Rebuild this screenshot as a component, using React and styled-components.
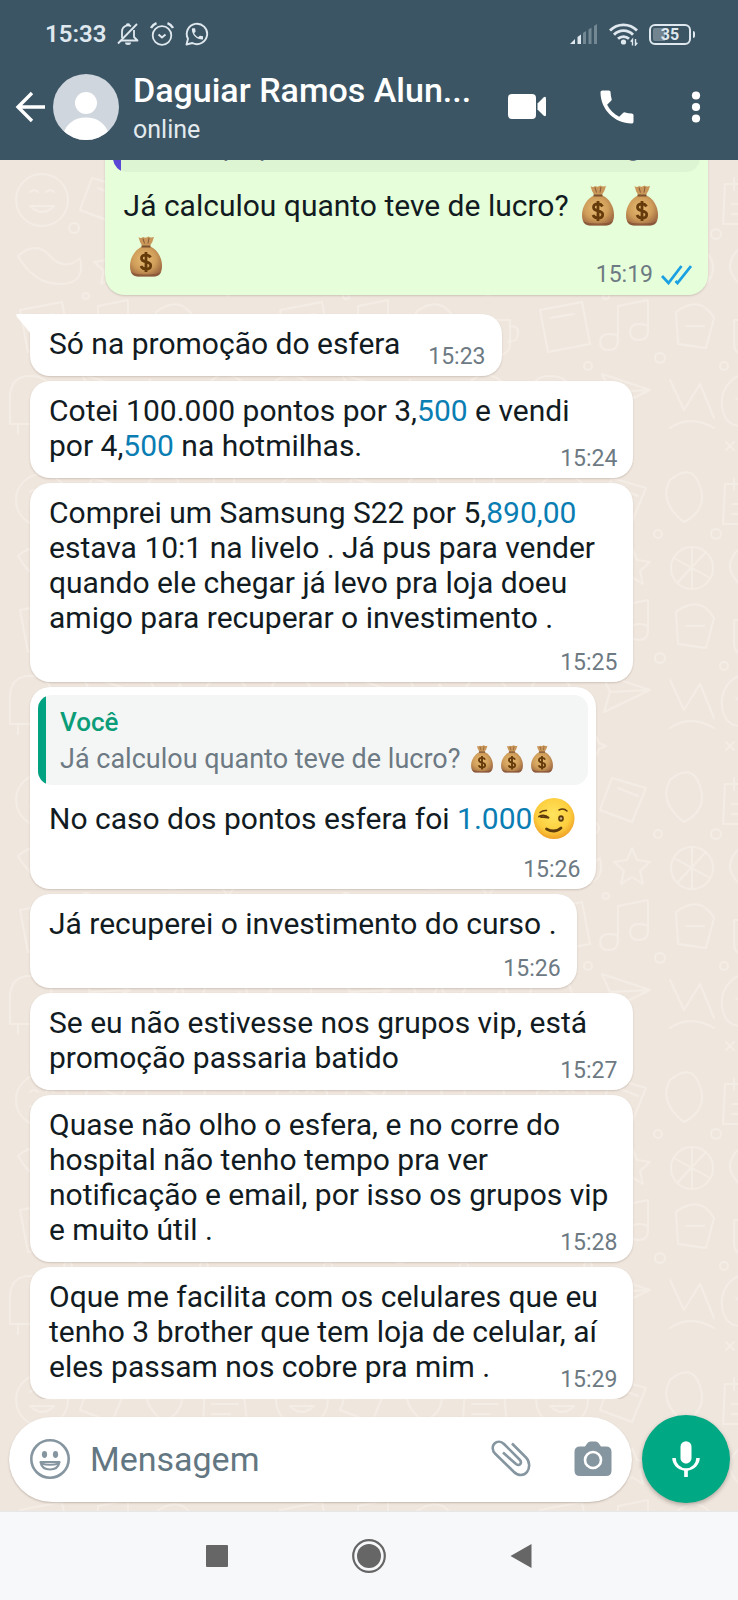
import React, { useState } from "react";
import styled, { createGlobalStyle } from "styled-components";

const GlobalStyle = createGlobalStyle`
  * {
    box-sizing: border-box;
  }

  body {
    margin: 0;
    font-family: Roboto, "Liberation Sans", sans-serif;
    color: #111b21;
  }

  button {
    display: flex;
    align-items: center;
    justify-content: center;
    padding: 0;
    border: none;
    background: transparent;
    color: inherit;
    cursor: pointer;
  }

  svg {
    flex-shrink: 0;
  }
`;

const Page = styled.div`
  display: flex;
  flex-direction: column;
  height: 100vh;
  overflow: hidden;
`;

/* ---------- header ---------- */

const Header = styled.header`
  position: relative;
  z-index: 1;
  background: #3b5564;
  color: #fff;
`;

const StatusBar = styled.div`
  display: flex;
  align-items: center;
  justify-content: space-between;
  height: 54px;
  padding: 14px 47px 0 45px;
  color: #dfe8ee;
`;

const StatusGroup = styled.div`
  display: flex;
  align-items: center;
  gap: ${(props) => props.$gap}px;
`;

const Clock = styled.time`
  font-size: 24px;
  line-height: 32px;
  font-weight: 600;
`;

const AppBar = styled.div`
  display: flex;
  align-items: center;
  height: 106px;
  padding: 0 8px 0 14px;
`;

const BackButton = styled.button`
  width: 32px;
  height: 60px;
  margin-right: 7px;
`;

const Contact = styled.div`
  flex: 1;
  min-width: 0;
  padding: 4px 0 0 14px;
`;

const ContactName = styled.h1`
  margin: 0;
  font-size: 34px;
  line-height: 42px;
  font-weight: 500;
  white-space: nowrap;
`;

const ContactStatus = styled.p`
  margin: 0;
  font-size: 25px;
  line-height: 38px;
  color: #e3eaee;
`;

const HeaderAction = styled.button`
  width: ${(props) => props.$width || 90}px;
  height: 60px;
`;

/* ---------- conversation ---------- */

const Chat = styled.main`
  position: relative;
  display: flex;
  flex: 1;
  flex-direction: column;
  min-height: 0;
  background: #efe6de;
`;

const Wallpaper = styled.svg`
  position: absolute;
  inset: 0;
  width: 100%;
  height: 100%;
`;

const Messages = styled.div`
  position: relative;
  display: flex;
  flex: 1;
  flex-direction: column;
  align-items: flex-start;
  justify-content: flex-end;
  gap: 5px;
  min-height: 0;
  padding: 0 30px;
  overflow: hidden;
`;

const Bubble = styled.article`
  position: relative;
  display: flow-root;
  flex-shrink: 0;
  align-self: ${(props) => (props.$sent ? "flex-end" : "flex-start")};
  width: ${(props) => (props.$wide ? "89%" : "fit-content")};
  max-width: 89%;
  margin-bottom: ${(props) => (props.$sent ? 14 : 0)}px;
  padding: 12px 20px 15px 19px;
  border-radius: 20px;
  border-top-left-radius: ${(props) => (props.$tail ? 0 : 20)}px;
  background: ${(props) => (props.$sent ? "#e6ffda" : "#fff")};
  box-shadow: 0 1px 2px rgba(90, 70, 50, 0.22);
  font-size: 30px;
  line-height: 35px;
  white-space: nowrap;
`;

const Tail = styled.svg`
  position: absolute;
  top: 0;
  left: -14px;
`;

const Time = styled.time`
  float: right;
  display: flex;
  align-items: center;
  gap: 8px;
  margin: ${(props) => (props.$tall ? 32 : 17)}px -4px -10px 28px;
  font-size: 23px;
  line-height: 28px;
  color: #6d7a83;
`;

// Time that sits on a row of its own under the text
const TimeBelow = styled(Time)`
  float: none;
  justify-content: flex-end;
  margin: 14px -4px -10px 0;
`;

const Linked = styled.a`
  color: #0a7db3;
  text-decoration: none;
`;

const Quote = styled.blockquote`
  display: flex;
  margin: -4px -12px 6px -11px;
  border-radius: 14px;
  overflow: hidden;
  background: ${(props) => (props.$sent ? "#def5d4" : "#f4f6f6")};
`;

const QuoteBar = styled.span`
  width: 8px;
  background: ${(props) => props.$color};
`;

const QuoteBody = styled.div`
  padding: 9px 15px 7px 14px;
  font-size: 27px;
  line-height: 37px;
  color: #6d7a83;
`;

const QuoteAuthor = styled.strong`
  display: block;
  font-size: 26px;
  font-weight: 500;
  color: ${(props) => props.$color};
`;

const Emoji = styled.svg`
  width: 44px;
  height: 44px;
  margin-top: 7px;
  vertical-align: -13px;
`;

const SmallEmoji = styled.svg`
  width: 30px;
  height: 30px;
  vertical-align: -7px;
`;

/* ---------- composer ---------- */

const Composer = styled.form`
  position: relative;
  display: flex;
  align-items: center;
  gap: 10px;
  padding: 16px 8px 8px 9px;
`;

const InputPill = styled.div`
  display: flex;
  flex: 1;
  align-items: center;
  min-width: 0;
  height: 85px;
  padding: 0 14px 0 16px;
  border-radius: 43px;
  background: #fff;
  box-shadow: 0 1px 2px rgba(90, 70, 50, 0.3);
  color: #8696a0;
`;

const PillButton = styled.button`
  width: ${(props) => props.$width}px;
  height: 60px;
`;

const MessageInput = styled.input`
  flex: 1;
  min-width: 0;
  padding: 0 15px;
  border: none;
  outline: none;
  background: transparent;
  font-family: inherit;
  font-size: 34px;
  line-height: 44px;
  color: #111b21;

  &::placeholder {
    color: #637782;
    opacity: 1;
  }
`;

const MicButton = styled.button`
  flex-shrink: 0;
  width: 88px;
  height: 88px;
  border-radius: 50%;
  background: #00a884;
  color: #fff;
  box-shadow: 0 2px 4px rgba(60, 50, 40, 0.35);
`;

const NavBar = styled.nav`
  display: flex;
  justify-content: center;
  height: 89px;
  border-top: 1px solid #e6e7e9;
  background: #f7f8fa;
  color: #666;
`;

const NavButton = styled.button`
  width: 152px;
`;

/* ---------- drawings ---------- */

const PHONE =
  "M6.62 10.79c1.44 2.83 3.76 5.14 6.59 6.59l2.2-2.2c.27-.27.67-.36 1.02-.24 1.12.37 2.33.57 3.57.57.55 0 1 .45 1 1V20c0 .55-.45 1-1 1-9.39 0-17-7.61-17-17 0-.55.45-1 1-1h3.5c.55 0 1 .45 1 1 0 1.25.2 2.45.57 3.57.11.35.03.74-.25 1.02l-2.2 2.2z";

const BellOffIcon = () => (
  <svg width="22" height="24" viewBox="0 0 22 24" fill="none" stroke="currentColor" strokeWidth="1.8">
    <path d="M5 16V9.500a6 6 0 0 1 9-5.200M17 8v7l3.500 3.500H4" strokeLinejoin="round" />
    <path d="M1 21.500L20 2" />
    <path d="M8 20.500h6a3 2.500 0 0 1-6 0z" fill="currentColor" stroke="none" />
    <path d="M9.500 3a1.800 1.800 0 0 1 3 0" />
  </svg>
);

const AlarmIcon = () => (
  <svg width="24" height="24" viewBox="0 0 24 24" fill="none" stroke="currentColor" strokeWidth="1.8">
    <circle cx="12" cy="13.500" r="9.300" />
    <path d="M1 6Q3 2.500 6.500 1.200M23 6Q21 2.500 17.500 1.200" strokeWidth="2.400" />
    <path d="M8.500 12.500l3.500 3 3.500-3" strokeWidth="2" />
  </svg>
);

const WhatsAppIcon = () => (
  <svg width="24" height="24" viewBox="0 0 24 24" fill="none">
    <path d="M1.500 22.500l1.500-5.700A10.200 10.200 0 1 1 7.300 21z" stroke="currentColor" strokeWidth="1.9" strokeLinejoin="round" />
    <path d={PHONE} fill="currentColor" transform="translate(5 4.500) scale(0.62)" />
  </svg>
);

const SignalIcon = () => (
  <svg width="28" height="20" viewBox="0 0 28 20" fill="currentColor">
    <path d="M0 20l5-5v5z" />
    <path d="M7.500 13l3.500-2.500V20H7.500z" />
    <path d="M13 9l3-2v13h-3zM18.500 5.500l3-2V20h-3zM24 2l3-2v20h-3z" opacity="0.35" />
  </svg>
);

const WifiIcon = () => (
  <svg width="29" height="24" viewBox="0 0 29 24" fill="none" stroke="currentColor" strokeWidth="2.8">
    <path d="M1 8.500a19 19 0 0 1 27 0" />
    <path d="M5 12.800a13 13 0 0 1 19 0" />
    <path d="M9 16.800a8 8 0 0 1 11 0" />
    <circle cx="14.500" cy="20" r="2.600" fill="currentColor" stroke="none" />
    <path d="M23.500 23.500v-6l-1.800 2.200M26.500 17v6l1.800-2.200" strokeWidth="1.4" />
  </svg>
);

const Battery = styled.span`
  position: relative;
  width: 42px;
  height: 21px;
  padding: 2px;
  border: 2px solid currentColor;
  border-radius: 6px;
  background: linear-gradient(90deg, #72848f 35%, transparent 35%) content-box;
  font-size: 16px;
  line-height: 14px;
  font-weight: 700;
  text-align: center;

  &::after {
    content: "";
    position: absolute;
    top: 5px;
    right: -6px;
    width: 2px;
    height: 7px;
    border-radius: 0 2px 2px 0;
    background: currentColor;
  }
`;

const BackIcon = () => (
  <svg width="32" height="32" viewBox="0 0 32 32" fill="none" stroke="currentColor" strokeWidth="3.4">
    <path d="M31 16H4M18 2L4 16l14 14" />
  </svg>
);

const Avatar = () => (
  <svg width="66" height="66" viewBox="0 0 66 66" role="img" aria-label="Foto do contato">
    <defs>
      <clipPath id="avatar-clip">
        <circle cx="33" cy="33" r="33" />
      </clipPath>
    </defs>
    <g clipPath="url(#avatar-clip)">
      <rect width="66" height="66" fill="#cfd6dd" />
      <circle cx="33" cy="29" r="11" fill="#fff" />
      <path d="M10 60Q16 43.500 33 43.500T56 60V66H10z" fill="#fff" />
    </g>
  </svg>
);

const VideoIcon = () => (
  <svg width="40" height="26" viewBox="0 0 40 26" fill="currentColor">
    <rect x="1" width="28" height="25" rx="4" />
    <path d="M30.500 9.500L36.500 3.500Q39 1.500 39 4.500v16q0 3-2.500 1L30.500 15.500z" />
  </svg>
);

const CallIcon = () => (
  <svg width="44" height="44" viewBox="0 0 24 24" fill="currentColor">
    <path d={PHONE} />
  </svg>
);

const MoreIcon = () => (
  <svg width="10" height="32" viewBox="0 0 10 32" fill="currentColor">
    <circle cx="5" cy="4.500" r="4.100" />
    <circle cx="5" cy="16" r="4.100" />
    <circle cx="5" cy="27.500" r="4.100" />
  </svg>
);

const ReadIcon = () => (
  <svg width="31" height="20" viewBox="0 0 31 20" fill="none" stroke="#1ba1e2" strokeWidth="2.8">
    <path d="M1 11l6.500 7L20.500 1" />
    <path d="M14.500 16l2 2L30 1" />
  </svg>
);

const BagShape = () => (
  <>
    <path d="M14.500 1q2.500 2 4.500 0 3 1.500 5.500-.5 2 1.500 5.500.5-1 5-4.500 9.500h-7Q15.500 6 14.500 1z" fill="#c9975a" />
    <path d="M18 10.500h8.500C33 13.500 38 21 38 30c0 7-3 10.500-8 10.500h-16c-5 0-8-3.500-8-10.500C6 21 11.500 13.500 18 10.500z" fill="url(#bag-fill)" />
    <path d="M7 36q2 4.500 7 4.500h16q5 0 7-4.500-4 2.500-15 2.500T7 36z" fill="#7b4b35" opacity="0.6" />
    <path d="M17.500 10.500h9" stroke="#7a5230" strokeWidth="2" />
    <path d="M19 2.500l1.500 5M25 2l-1 5.500" stroke="#875b35" strokeWidth="1" />
    <path
      d="M26.500 21.500c-1-2-2.500-2.600-4.500-2.600-2.800 0-4.500 1.500-4.500 3.500 0 4.600 9.200 2.300 9.200 7 0 2.200-1.800 3.600-4.700 3.600-2.500 0-4.200-1-5-3M22 16v20"
      fill="none"
      stroke="#663b0c"
      strokeWidth="2.8"
    />
  </>
);

const Bag = () => (
  <Emoji viewBox="0 0 44 44" role="img" aria-label="💰">
    <BagShape />
  </Emoji>
);

const SmallBag = () => (
  <SmallEmoji viewBox="0 0 44 44" role="img" aria-label="💰">
    <BagShape />
  </SmallEmoji>
);

const Wink = () => (
  <Emoji viewBox="0 0 44 44" role="img" aria-label="😉">
    <circle cx="22" cy="20.500" r="20.500" fill="url(#wink-fill)" />
    <g fill="none" stroke="#5c3a0b" strokeLinecap="round">
      <path d="M7 18.500q5.500-3 10 1.500-4-1.200-8-.8" strokeWidth="1.8" />
      <path d="M8 14.500q3-2.500 6.500-2M27 12q4.500-2.500 8 1" strokeWidth="1.5" />
      <path d="M14.500 31q8.500 4.500 14.500-1" strokeWidth="2.8" />
    </g>
    <ellipse cx="29" cy="20.500" rx="2.800" ry="3.200" fill="#5c3a0b" />
    <circle cx="29" cy="20.500" r="1.200" fill="#c9b48b" />
  </Emoji>
);

const SmileIcon = () => (
  <svg width="40" height="40" viewBox="0 0 40 40" fill="none" stroke="currentColor">
    <circle cx="20" cy="20" r="18.700" strokeWidth="2.600" />
    <ellipse cx="14.500" cy="15.500" rx="2.600" ry="3.400" fill="currentColor" stroke="none" />
    <ellipse cx="25.500" cy="15.500" rx="2.600" ry="3.400" fill="currentColor" stroke="none" />
    <path d="M10.500 23h19q-1.500 7.500-9.500 7.500T10.500 23z" strokeWidth="2.200" strokeLinejoin="round" />
    <path d="M11 24.500q9 2.500 18 0" strokeWidth="2" />
  </svg>
);

const ClipIcon = () => (
  <svg width="40" height="38" viewBox="0 0 40 38" fill="none" stroke="currentColor" strokeWidth="2.600">
    <path
      d="M21 3.500L35 17.500C39 21.500 39 28 36 32s-9 4-13 0L4 13.500C1 10.500 1 6 3.500 3.500s6.500-2.500 9.500.5L28.500 19.500c3 3 .5 7.500-3.500 4.500L12 12.500"
      strokeLinejoin="round"
    />
  </svg>
);

const CameraIcon = () => (
  <svg width="38" height="36" viewBox="0 0 38 36">
    <path
      d="M6 5.500h5L13.500 2q1-1.500 3-1.500h5q2 0 3 1.500L27 5.500h5q5.500 0 5.500 5.500v18.500q0 5.500-5.500 5.500H6Q.5 35 .5 29.500V11Q.5 5.500 6 5.500z"
      fill="currentColor"
    />
    <circle cx="19" cy="19" r="8" fill="none" stroke="#fff" strokeWidth="2.600" />
  </svg>
);

const MicIcon = () => (
  <svg width="44" height="44" viewBox="0 0 24 24" fill="currentColor">
    <path d="M12 14.500c1.600 0 3-1.300 3-3V5.300a3 3 0 0 0-6 0v6.200c0 1.700 1.400 3 3 3z" />
    <path d="M19.500 11.500h-1.900a5.600 5.600 0 0 1-11.200 0H4.500c0 3.600 2.900 6.300 6.500 6.900v3.400h2v-3.400c3.600-.6 6.500-3.300 6.500-6.900z" />
  </svg>
);

// Faint doodles repeated behind the conversation
const Doodles = () => (
  <Wallpaper aria-hidden="true">
    <defs>
      <pattern id="doodles" width="260" height="300" patternUnits="userSpaceOnUse">
        <g fill="none" stroke="#f4ede6" strokeWidth="2" strokeLinecap="round" strokeLinejoin="round">
          <circle cx="42" cy="40" r="26" />
          <path d="M30 32q4-4 8 0M46 32q4-4 8 0M30 46q12 12 24 0z" />
          <path d="M92 18l34 10-14 34-32-12zM98 28l20 8" />
          <path d="M150 20q22-18 30 6t-16 36q-26-20-14-42z" />
          <path d="M205 24h38l4 40h-44zM214 18v12M234 18v12M212 44h26M212 54h18" />
          <path d="M18 96q18-16 32 0t30 2q6 26-20 26t-42-28z" />
          <path d="M112 88l5 12 13 2-10 9 3 13-11-7-11 7 3-13-10-9 13-2z" />
          <circle cx="172" cy="108" r="21" />
          <path d="M154 98l36 20M158 122l28-30M172 87v42" />
          <path d="M216 92q14-14 26 0t-2 28l-12 16-12-16q-12-14 0-28z" />
          <circle cx="228" cy="105" r="6" />
          <path d="M20 150l42-8 8 42-42 8zM30 158l24-4" />
          <path d="M98 146v34q0 10-9 10t-9-8 9-8 9 4M98 146l30-6v30q0 10-9 10t-9-8 9-8 9 4" />
          <path d="M156 152q24-18 38 6l-8 30-28-4zM166 166h18" />
          <path d="M214 160h36v24q0 12-18 12t-18-12zM250 166q12 0 6 14l-8 2" />
          <path d="M30 216q22 0 22 22v26H10v-26q0-22 20-22zM18 264v10M44 264v10" />
          <path d="M82 214l48 16-46 22 6-20zM90 232l40-2" />
          <path d="M150 220l14 30 16-26 14 34M150 268q20-14 44 0" />
          <path d="M222 214q26 2 26 26t-22 26-24-20 20-32zM216 238l12 8 12-14" />
          <circle cx="74" cy="68" r="5" />
          <circle cx="138" cy="74" r="4" />
          <circle cx="196" cy="74" r="5" />
          <circle cx="86" cy="136" r="3" />
          <circle cx="140" cy="198" r="5" />
          <circle cx="68" cy="206" r="4" />
          <circle cx="204" cy="206" r="4" />
          <path d="M76 276l3 7 7 3-7 3-3 7-3-7-7-3 7-3zM206 282l8 8M214 282l-8 8" />
        </g>
      </pattern>
    </defs>
    <rect width="100%" height="100%" fill="url(#doodles)" />
  </Wallpaper>
);

const PaintDefs = styled.svg`
  position: absolute;
  width: 0;
  height: 0;
`;

const EmojiPaints = () => (
  <PaintDefs aria-hidden="true">
    <defs>
      <radialGradient id="bag-fill" cx="45%" cy="42%" r="62%">
        <stop offset="0" stopColor="#e8bd75" />
        <stop offset="0.6" stopColor="#cf9d59" />
        <stop offset="1" stopColor="#a06a42" />
      </radialGradient>
      <radialGradient id="wink-fill" cx="48%" cy="40%" r="62%">
        <stop offset="0" stopColor="#ffe45e" />
        <stop offset="0.65" stopColor="#fdcf3f" />
        <stop offset="1" stopColor="#ee9c25" />
      </radialGradient>
    </defs>
  </PaintDefs>
);

/* ---------- app ---------- */

// One entry per line; a part given as { link } is drawn as a number link
const MESSAGES = [
  { time: "15:23", tail: true, lines: [["Só na promoção do esfera"]] },
  {
    time: "15:24",
    wide: true,
    lines: [
      ["Cotei 100.000 pontos por 3,", { link: "500" }, " e vendi"],
      ["por 4,", { link: "500" }, " na hotmilhas."],
    ],
  },
  {
    time: "15:25",
    wide: true,
    below: true,
    lines: [
      ["Comprei um Samsung S22 por 5,", { link: "890,00" }],
      ["estava 10:1 na livelo . Já pus para vender"],
      ["quando ele chegar já levo pra loja doeu"],
      ["amigo para recuperar o investimento ."],
    ],
  },
  {
    time: "15:26",
    below: true,
    quote: true,
    wink: true,
    lines: [["No caso dos pontos esfera foi ", { link: "1.000" }]],
  },
  { time: "15:26", below: true, lines: [["Já recuperei o investimento do curso ."]] },
  {
    time: "15:27",
    wide: true,
    lines: [["Se eu não estivesse nos grupos vip, está"], ["promoção passaria batido"]],
  },
  {
    time: "15:28",
    wide: true,
    lines: [
      ["Quase não olho o esfera, e no corre do"],
      ["hospital não tenho tempo pra ver"],
      ["notificação e email, por isso os grupos vip"],
      ["e muito útil ."],
    ],
  },
  {
    time: "15:29",
    wide: true,
    lines: [
      ["Oque me facilita com os celulares que eu"],
      ["tenho 3 brother que tem loja de celular, aí"],
      ["eles passam nos cobre pra mim ."],
    ],
  },
];

function Line({ parts }) {
  return parts.map((part, i) =>
    typeof part === "string" ? (
      <span key={i}>{part}</span>
    ) : (
      <Linked key={i} href={`tel:${part.link}`}>
        {part.link}
      </Linked>
    )
  );
}

function Message({ message }) {
  const Stamp = message.below ? TimeBelow : Time;

  return (
    <Bubble $wide={message.wide} $tail={message.tail}>
      {message.tail && (
        <Tail width="15" height="20" viewBox="0 0 15 20">
          <path d="M15 0H2Q-1 0 1 3l14 17z" fill="#fff" />
        </Tail>
      )}
      {message.quote && (
        <Quote>
          <QuoteBar $color="#00a281" />
          <QuoteBody>
            <QuoteAuthor $color="#0b9c78">Você</QuoteAuthor>
            Já calculou quanto teve de lucro? <SmallBag />
            <SmallBag />
            <SmallBag />
          </QuoteBody>
        </Quote>
      )}
      {message.lines.map((parts, i) => (
        <React.Fragment key={i}>
          {i > 0 && <br />}
          <Line parts={parts} />
        </React.Fragment>
      ))}
      {message.wink && <Wink />}
      <Stamp>{message.time}</Stamp>
    </Bubble>
  );
}

function App() {
  const [text, setText] = useState("");

  return (
    <Page>
      <GlobalStyle />
      <EmojiPaints />
      <Header>
        <StatusBar>
          <StatusGroup $gap={11}>
            <Clock>15:33</Clock>
            <BellOffIcon />
            <AlarmIcon />
            <WhatsAppIcon />
          </StatusGroup>
          <StatusGroup $gap={11}>
            <SignalIcon />
            <WifiIcon />
            <Battery>35</Battery>
          </StatusGroup>
        </StatusBar>
        <AppBar>
          <BackButton aria-label="Voltar">
            <BackIcon />
          </BackButton>
          <Avatar />
          <Contact>
            <ContactName>Daguiar Ramos Alun...</ContactName>
            <ContactStatus>online</ContactStatus>
          </Contact>
          <HeaderAction aria-label="Chamada de vídeo">
            <VideoIcon />
          </HeaderAction>
          <HeaderAction aria-label="Ligar">
            <CallIcon />
          </HeaderAction>
          <HeaderAction $width={68} aria-label="Mais opções">
            <MoreIcon />
          </HeaderAction>
        </AppBar>
      </Header>

      <Chat>
        <Doodles />
        <Messages>
          <Bubble $sent $wide>
            <Quote $sent>
              <QuoteBar $color="#5b47d6" />
              <QuoteBody>Esse top, quanto rendeu, valeu muito amigo</QuoteBody>
            </Quote>
            Já calculou quanto teve de lucro? <Bag />
            <Bag />
            <br />
            <Bag />
            <Time $tall>
              15:19
              <ReadIcon />
            </Time>
          </Bubble>
          {MESSAGES.map((message, i) => (
            <Message key={i} message={message} />
          ))}
        </Messages>
        <Composer onSubmit={(e) => e.preventDefault()}>
          <InputPill>
            <PillButton type="button" $width={50} aria-label="Emojis">
              <SmileIcon />
            </PillButton>
            <MessageInput
              type="text"
              aria-label="Mensagem"
              placeholder="Mensagem"
              value={text}
              onChange={(e) => setText(e.target.value)}
            />
            <PillButton type="button" $width={114} aria-label="Anexar">
              <ClipIcon />
            </PillButton>
            <PillButton type="button" $width={50} aria-label="Câmera">
              <CameraIcon />
            </PillButton>
          </InputPill>
          <MicButton type="button" aria-label="Gravar áudio">
            <MicIcon />
          </MicButton>
        </Composer>
      </Chat>

      <NavBar>
        <NavButton aria-label="Recentes">
          <svg width="22" height="22" viewBox="0 0 22 22">
            <rect width="22" height="22" rx="1" fill="currentColor" />
          </svg>
        </NavButton>
        <NavButton aria-label="Início">
          <svg width="34" height="34" viewBox="0 0 34 34">
            <circle cx="17" cy="17" r="15.800" fill="none" stroke="currentColor" strokeWidth="2.200" />
            <circle cx="17" cy="17" r="12" fill="currentColor" />
          </svg>
        </NavButton>
        <NavButton aria-label="Voltar">
          <svg width="22" height="26" viewBox="0 0 22 26">
            <path d="M21.500 1v24L.5 13z" fill="currentColor" />
          </svg>
        </NavButton>
      </NavBar>
    </Page>
  );
}

export default App;
